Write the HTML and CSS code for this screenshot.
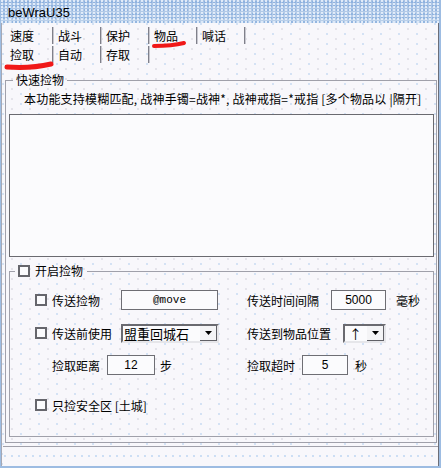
FILE: index.html
```html
<!DOCTYPE html>
<html lang="zh">
<head>
    <meta charset="UTF-8">
    <title>beWraU35</title>
    <link rel="stylesheet" href="styles.css">
</head>
<body>
<div class="window">
    <div class="titlebar">beWraU35</div>

    <div class="client">
        <div class="tabs">
            <div class="tab-row">
                <span class="tab">速度</span>
                <span class="tab">战斗</span>
                <span class="tab">保护</span>
                <span class="tab">物品</span>
                <span class="tab">喊话</span>
            </div>
            <div class="tab-row">
                <span class="tab">捡取</span>
                <span class="tab">自动</span>
                <span class="tab">存取</span>
            </div>
        </div>

        <fieldset class="group outer">
            <legend>快速捡物</legend>
            <p class="desc">本功能支持模糊匹配, 战神手镯=战神*, 战神戒指=*戒指 [多个物品以 |隔开]</p>
            <div class="list"></div>

            <fieldset class="group inner">
                <legend><span class="check"></span>开启捡物</legend>

                <div class="row first">
                    <div class="cell-left">
                        <span class="check"></span>
                        <span class="lbl lbl-long">传送捡物</span>
                        <span class="edit edit-cmd">@move</span>
                    </div>
                    <div class="cell-right">
                        <span class="lbl lbl-interval">传送时间间隔</span>
                        <span class="edit edit-ms">5000</span>
                        <span class="unit unit-ms">毫秒</span>
                    </div>
                </div>

                <div class="row second">
                    <div class="cell-left">
                        <span class="check"></span>
                        <span class="lbl lbl-long">传送前使用</span>
                        <span class="combo combo-item">盟重回城石<span class="combo-btn"><svg width="7" height="4" viewBox="0 0 7 4"><path d="M0 0h7L3.5 4z" fill="#000"/></svg></span></span>
                    </div>
                    <div class="cell-right">
                        <span class="lbl lbl-pos">传送到物品位置</span>
                        <span class="combo combo-dir">↑<span class="combo-btn"><svg width="7" height="4" viewBox="0 0 7 4"><path d="M0 0h7L3.5 4z" fill="#000"/></svg></span></span>
                    </div>
                </div>

                <div class="row third">
                    <div class="cell-left">
                        <span class="no-check"></span>
                        <span class="lbl lbl-short">捡取距离</span>
                        <span class="edit edit-dist">12</span>
                        <span class="unit">步</span>
                    </div>
                    <div class="cell-right">
                        <span class="lbl lbl-short">捡取超时</span>
                        <span class="edit edit-time">5</span>
                        <span class="unit unit-sec">秒</span>
                    </div>
                </div>

                <div class="row fourth">
                    <div class="cell-left">
                        <span class="check"></span>
                        <span class="lbl">只捡安全区 [土城]</span>
                    </div>
                </div>
            </fieldset>
        </fieldset>

        <div class="statusbar"></div>
    </div>

    <!-- red pen marks drawn over the screenshot -->
    <svg class="marks" width="441" height="468" viewBox="0 0 441 468">
        <path d="M154 46 C164 46 176 45 184 43" stroke="#f01818" stroke-width="4" fill="none" stroke-linecap="round"/>
        <path d="M7 67 C20 68 38 67 51 64" stroke="#f01818" stroke-width="5" fill="none" stroke-linecap="round"/>
    </svg>
</div>
</body>
</html>
```

FILE: styles.css
```css
body {
    margin: 0;
    background: #fff;
    font-family: "Noto Sans CJK SC", "Liberation Sans", sans-serif;
    font-size: 12px;
    color: #000;
}

.window {
    position: relative;
    width: 441px;
    height: 468px;
    box-sizing: border-box;
    display: flex;
    flex-direction: column;
    background: #a9c4e6;
    border-style: solid;
    border-color: #9dbce2;
    border-width: 0 2px 2px 1px;
}

.titlebar {
    flex: none;
    height: 23px;
    padding-left: 7px;
    line-height: 25px;
    font-family: "Liberation Sans", sans-serif;
    font-size: 13px;
    background-color: #b6cce8;
    background-image:
        radial-gradient(circle at 1px 1px, rgba(240, 246, 255, 0.8) 0.7px, transparent 1.2px),
        radial-gradient(circle at 1px 1px, rgba(130, 170, 220, 0.7) 0.7px, transparent 1.2px),
        linear-gradient(#a8c2e4, #bcd1ea);
    background-size: 4px 3px, 3px 4px, 100% 100%;
    background-position: 0 0, 2px 1px, 0 0;
}

.client {
    flex: 1;
    display: flex;
    flex-direction: column;
    padding: 4px 1px 1px 3px;
    border-left: 1px solid #a6a8b4;
    border-right: 1px solid #6c6e78;
    background-color: #f8f7fb;
    background-image:
        radial-gradient(circle at 1px 1px, rgba(150, 190, 235, 0.5) 0.6px, transparent 1px),
        radial-gradient(circle at 1px 1px, rgba(170, 170, 185, 0.35) 0.6px, transparent 1px);
    background-size: 18px 10px, 18px 10px;
    background-position: 0 0, 9px 5px;
}

.tab-row {
    display: flex;
    height: 17px;
    margin-bottom: 2px;
}

.tab {
    width: 42px;
    padding-left: 5px;
    line-height: 17px;
    border-right: 1px solid #80808a;
    box-shadow: 1px 0 0 #c8c8d0;
}

.group {
    margin: 0;
    border: 1px solid #a0a0aa;
    min-width: 0;
}

.group legend {
    line-height: 14px;
    padding: 0 3px;
}

.outer {
    margin-top: 8px;
    padding: 4px 2px 5px 3px;
}

.outer > legend {
    margin-left: 4px;
}

.desc {
    margin: 0 0 7px 15px;
    line-height: 16px;
    white-space: nowrap;
    letter-spacing: 0.2px;
}

.list {
    height: 141px;
    background: #fbfbfd;
    border: 1px solid #6a6a70;
}

.inner {
    margin-top: 7px;
    padding: 12px 0 21px 25px;
}

.inner > legend {
    display: flex;
    align-items: center;
    gap: 5px;
    margin-left: -20px;
    padding: 0 4px 0 3px;
}

.check {
    flex: none;
    width: 8px;
    height: 8px;
    border: 2px solid #66666c;
    background: #fbfbfd;
}

.no-check {
    width: 12px;
}

.row {
    display: flex;
    height: 20px;
    align-items: center;
}

.second {
    margin-top: 13px;
}

.third {
    margin-top: 12px;
}

.fourth {
    margin-top: 20px;
}

.cell-left {
    width: 212px;
    display: flex;
    align-items: center;
    gap: 5px;
}

.cell-right {
    display: flex;
    align-items: center;
}

.lbl {
    white-space: nowrap;
}

.lbl-long {
    width: 64px;
}

.lbl-short {
    width: 50px;
}

.cell-right .lbl-short {
    width: 55px;
}

.lbl-interval {
    width: 84px;
}

.lbl-pos {
    width: 96px;
}

.edit {
    box-sizing: border-box;
    height: 20px;
    line-height: 18px;
    text-align: center;
    border: 1px solid #6e6e74;
    background: #fbfbfd;
    font-family: "Liberation Sans", sans-serif;
    font-size: 12px;
}

.edit-cmd {
    width: 97px;
    font-family: "Liberation Mono", monospace;
    font-size: 11px;
}

.edit-ms {
    width: 55px;
}

.edit-dist {
    width: 48px;
}

.edit-time {
    width: 46px;
}

.unit-ms {
    margin-left: 10px;
}

.unit-sec {
    margin-left: 7px;
}

.combo {
    box-sizing: border-box;
    height: 19px;
    display: flex;
    align-items: center;
    justify-content: space-between;
    padding-left: 1px;
    border: 2px solid;
    border-color: #6a6a70 #e6e6ea #e6e6ea #6a6a70;
    background: #fbfbfd;
    font-size: 13px;
    line-height: 15px;
}

.combo-item {
    width: 98px;
}

.combo-dir {
    width: 43px;
    padding-left: 4px;
}

.combo-btn {
    box-sizing: border-box;
    width: 17px;
    height: 15px;
    display: flex;
    align-items: center;
    justify-content: center;
    border-right: 1px solid #606066;
    border-bottom: 1px solid #606066;
    background: #f4f4f6;
}

.statusbar {
    margin: auto -1px 0 -2px;
    height: 18px;
    border-top: 1px solid #a0a0aa;
    background-color: #f8f7fb;
    background-image: radial-gradient(circle at 1px 1px, rgba(150, 190, 235, 0.6) 0.6px, transparent 1px);
    background-size: 7px 18px;
    background-position: 8px 8px;
}

.marks {
    position: absolute;
    top: 0;
    left: -1px;
    pointer-events: none;
}
```
